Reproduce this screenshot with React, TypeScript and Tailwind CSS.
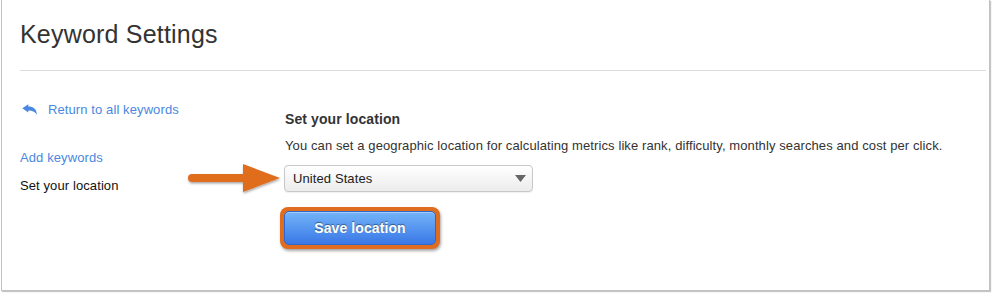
import React from "react";

const ReplyIcon = () => (
  <svg width="15" height="11" viewBox="0 0 15 11" className="block">
    <path d="M0.3 4.3 L6.3 0.2 L6.3 2.6 C11 2.6 14.8 5 14.8 10.8 C13 7.6 10.3 6.4 6.3 6.4 L6.3 8.6 Z" fill="#4a88e0" />
  </svg>
);

const OrangeArrow = () => (
  <svg width="100" height="34" viewBox="0 0 100 34" className="block">
    <defs>
      <filter id="sh" x="-10%" y="-20%" width="130%" height="160%">
        <feDropShadow dx="0.5" dy="1.5" stdDeviation="1.2" floodColor="#000" floodOpacity="0.35" />
      </filter>
    </defs>
    <g filter="url(#sh)">
      <line x1="6" y1="15" x2="62" y2="15" stroke="#e06d1f" strokeWidth="8" strokeLinecap="round" />
      <path d="M57 1 L94 15 L57 29 Z" fill="#e06d1f" />
    </g>
  </svg>
);

export default function App() {
  return (
    <div
      className="w-[992px] h-[293px] bg-white overflow-hidden"
      style={{ fontFamily: '"Liberation Sans", Arial, Helvetica, sans-serif' }}
    >
      <div className="ml-[1px] w-[989px] h-[291px] bg-white border-l border-r border-b border-[#c2c2c2] shadow-[1px_1px_1px_rgba(0,0,0,0.22)]">
        <div className="pl-[18px] pr-[3px] pt-[19px]">
          <h1 className="text-[25px] leading-[30px] text-[#333] font-normal tracking-[0.2px]">Keyword Settings</h1>
          <div className="mt-[21px] h-px bg-[#dddddd]" />
        </div>
        <div className="flex pl-[18px] tracking-[0.1px]">
          <div className="w-[265px] pt-[30px] text-[13px] leading-[18px] relative">
            <div className="flex items-center">
              <span className="ml-[2px] mt-[-1px]">
                <ReplyIcon />
              </span>
              <span className="ml-[11px] text-[#4a88e0]">Return to all keywords</span>
            </div>
            <div className="mt-[30px] text-[#4a88e0]">Add keywords</div>
            <div className="mt-[10px] text-[#111]">Set your location</div>
            <div className="absolute left-[166px] top-[92px]">
              <OrangeArrow />
            </div>
          </div>
          <div className="pt-[38px] text-[#333]">
            <div className="text-[14px] leading-[20px] font-bold">Set your location</div>
            <div className="mt-[8px] text-[13px] leading-[18px]">
              You can set a geographic location for calculating metrics like rank, difficulty, monthly searches and cost per click.
            </div>
            <div className="mt-[10px] ml-[-1px] w-[249px] h-[27px] rounded-[4px] border border-[#c8c8c8] bg-gradient-to-b from-white to-[#ececec] flex items-center justify-between pl-[8px] pr-[6px] shadow-[0_1px_1px_rgba(0,0,0,0.06)]">
              <span className="text-[13px] text-[#222]">United States</span>
              <svg width="11" height="7" viewBox="0 0 11 7" className="block">
                <path d="M0 0 L11 0 L5.5 7 Z" fill="#666" />
              </svg>
            </div>
            <div className="mt-[15px] ml-[-5px] w-[160px] h-[42px] rounded-[8px] bg-[#e06d1f] p-[4px] shadow-[1px_2px_3px_rgba(0,0,0,0.35)]">
              <div className="w-full h-full rounded-[5px] border border-[#2b67cc] bg-gradient-to-b from-[#74b4f8] to-[#3a77e6] flex items-center justify-center shadow-[inset_0_1px_0_rgba(255,255,255,0.35)]">
                <span className="text-[14px] font-bold text-white [text-shadow:0_-1px_1px_rgba(0,0,0,0.45)]">Save location</span>
              </div>
            </div>
          </div>
        </div>
      </div>
    </div>
  );
}
